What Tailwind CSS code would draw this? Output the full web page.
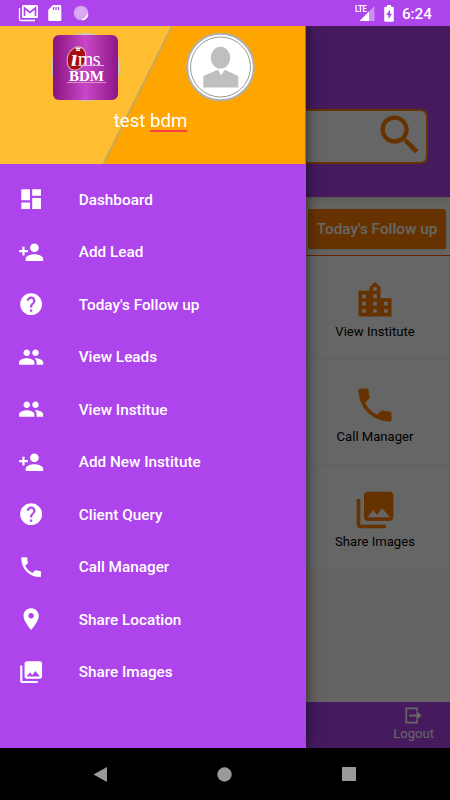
<!DOCTYPE html>
<html lang="en">

<head>
    <meta charset="UTF-8" />
    <meta name="viewport" content="width=device-width, initial-scale=1.0" />
    <title>IMS BDM</title>
    <script src="https://cdn.jsdelivr.net/npm/@tailwindcss/browser@4"></script>
</head>

<body class="w-[450px] h-[800px] overflow-hidden bg-black font-['Roboto',sans-serif] flex flex-col">

    <!-- Icon set -->
    <svg class="hidden" xmlns="http://www.w3.org/2000/svg">
        <symbol id="dashboard" viewBox="0 0 24 24"><path d="M3 13h8V3H3v10zm0 8h8v-6H3v6zm10 0h8V11h-8v10zm0-18v6h8V3h-8z" /></symbol>
        <symbol id="person-add" viewBox="0 0 24 24"><path d="M15 12c2.21 0 4-1.79 4-4s-1.79-4-4-4-4 1.79-4 4 1.79 4 4 4zm-9-2V7H4v3H1v2h3v3h2v-3h3v-2H6zm9 4c-2.67 0-8 1.34-8 4v2h16v-2c0-2.66-5.33-4-8-4z" /></symbol>
        <symbol id="help" viewBox="0 0 24 24"><path d="M12 2C6.48 2 2 6.48 2 12s4.480 10 10 10 10-4.480 10-10S17.520 2 12 2zm1 17h-2v-2h2v2zm2.070-7.750l-.9.920C13.450 12.900 13 13.500 13 15h-2v-.5c0-1.100.450-2.100 1.170-2.830l1.240-1.260c.370-.360.590-.860.590-1.410 0-1.100-.9-2-2-2s-2 .9-2 2H8c0-2.210 1.790-4 4-4s4 1.790 4 4c0 .880-.360 1.680-.930 2.250z" /></symbol>
        <symbol id="people" viewBox="0 0 24 24"><path d="M16 11c1.660 0 2.990-1.340 2.990-3S17.660 5 16 5c-1.660 0-3 1.340-3 3s1.340 3 3 3zm-8 0c1.660 0 2.990-1.340 2.990-3S9.660 5 8 5C6.340 5 5 6.340 5 8s1.340 3 3 3zm0 2c-2.330 0-7 1.170-7 3.500V19h14v-2.500c0-2.330-4.670-3.500-7-3.500zm8 0c-.290 0-.620.020-.970.050 1.160.840 1.970 1.970 1.970 3.450V19h6v-2.500c0-2.330-4.670-3.500-7-3.500z" /></symbol>
        <symbol id="phone" viewBox="0 0 24 24"><path d="M6.620 10.790c1.440 2.830 3.760 5.140 6.590 6.590l2.200-2.200c.270-.270.670-.360 1.020-.240 1.120.370 2.330.570 3.570.570.550 0 1 .450 1 1V20c0 .550-.450 1-1 1-9.390 0-17-7.610-17-17 0-.550.450-1 1-1h3.500c.550 0 1 .450 1 1 0 1.250.2 2.450.570 3.570.110.350.030.740-.250 1.020l-2.200 2.200z" /></symbol>
        <symbol id="place" viewBox="0 0 24 24"><path d="M12 2C8.130 2 5 5.130 5 9c0 5.250 7 13 7 13s7-7.750 7-13c0-3.870-3.130-7-7-7zm0 9.500c-1.380 0-2.500-1.120-2.500-2.500s1.120-2.500 2.500-2.500 2.500 1.120 2.500 2.500-1.120 2.500-2.500 2.500z" /></symbol>
        <symbol id="images" viewBox="0 0 24 24"><path d="M22 16V4c0-1.100-.9-2-2-2H8c-1.100 0-2 .9-2 2v12c0 1.100.9 2 2 2h12c1.100 0 2-.9 2-2zm-11-4l2.030 2.710L16 11l4 5H8l3-4zM2 6v14c0 1.100.9 2 2 2h14v-2H4V6H2z" /></symbol>
        <symbol id="city" viewBox="0 0 24 24"><path d="M15 11V5l-3-3-3 3v2H3v14h18V11h-6zm-8 8H5v-2h2v2zm0-4H5v-2h2v2zm0-4H5V9h2v2zm6 8h-2v-2h2v2zm0-4h-2v-2h2v2zm0-4h-2V9h2v2zm0-4h-2V5h2v2zm6 12h-2v-2h2v2zm0-4h-2v-2h2v2z" /></symbol>
    </svg>

    <!-- Status bar -->
    <header class="h-[26px] shrink-0 bg-[#ad44ec] flex items-center justify-between pl-[18px] pr-[18px] text-white">
        <div class="flex items-center gap-[9px]">
            <svg class="w-[21px] h-[18px]" viewBox="0 0 21 18" fill="none">
                <path d="M1.500 4v11q0 1.500 1.500 1.500h14" stroke="#fff" stroke-width="1.300" />
                <rect x="4" y="1" width="16" height="13" rx="1.500" fill="#fff" />
                <path d="M6.500 12V4l5.500 4.500L17.500 4v8" stroke="#ad44ec" stroke-width="1.700" />
            </svg>
            <svg class="w-[14px] h-[16px]" viewBox="0 0 14 16">
                <path d="M5 0h7q1.300 0 1.300 1.300v13.400q0 1.300-1.300 1.300H1.500Q.2 16 .2 14.700V5z" fill="#fff" />
                <path d="M5.500 2v3M8 2v3M10.500 2v3" stroke="#ad44ec" stroke-width="1.300" />
            </svg>
            <svg class="w-[16px] h-[16px] ml-[2px]" viewBox="0 0 16 16">
                <circle cx="8" cy="8" r="7.300" fill="#d9a9f5" />
                <circle cx="8" cy="8" r="6" fill="none" stroke="#c78af0" stroke-dasharray="1 1.300" />
                <path d="M14.800 9a7.200 7.200 0 0 1-5.800 5.800" fill="none" stroke="#fff" stroke-width="1.500" />
            </svg>
        </div>
        <div class="flex items-center">
            <div class="relative w-[20px] h-[18px]">
                <svg class="w-[20px] h-[18px]" viewBox="0 0 20 18">
                    <path d="M19.500 2v15H4.500z" fill="#ce8ff4" />
                    <path d="M14 7.500V17H4.500z" fill="#fff" />
                </svg>
                <span class="absolute left-0 top-px origin-left scale-x-80 text-[9.5px] leading-[8px] font-bold tracking-[-0.3px] bg-[#ad44ec]">LTE</span>
            </div>
            <svg class="w-[10px] h-[17px] ml-[9px]" viewBox="0 0 10 17">
                <path d="M3 0h4v1.700h1.500q1.300 0 1.300 1.300v12.500q0 1.300-1.300 1.300h-7Q.2 16.800.2 15.500V3q0-1.300 1.300-1.300H3z" fill="#fff" />
                <path d="M6 4.500L2.300 10H4.500v4.200L8 8.700H6z" fill="#ad44ec" />
            </svg>
            <span class="ml-[8px] mt-[2px] text-[15.3px] leading-[18px] font-medium">6:24</span>
        </div>
    </header>

    <div class="relative h-[722px] shrink-0 overflow-hidden">

        <!-- Home screen -->
        <main class="h-full bg-[#fffbf5] flex flex-col">
            <section class="h-[171px] shrink-0 bg-[#ad44ec] shadow-md pt-[83px] px-[22px]">
                <div class="h-[55px] bg-white border-2 border-[#ff8000] rounded-[7px] flex items-start justify-end">
                    <svg class="w-[52px] h-[52px] -mt-[2px]" viewBox="0 0 24 24" fill="#ff8000">
                        <path d="M15.500 14h-.790l-.280-.270C15.410 12.590 16 11.110 16 9.500 16 5.910 13.090 3 9.500 3S3 5.910 3 9.500 5.910 16 9.500 16c1.610 0 3.090-.590 4.230-1.570l.270.280v.790l5 4.990L20.490 19l-4.990-5zm-6 0C7.010 14 5 11.990 5 9.500S7.010 5 9.500 5 14 7.010 14 9.500 11.990 14 9.500 14z" />
                    </svg>
                </div>
            </section>
            <section class="h-[59px] shrink-0 pt-[12px] pr-[4px] flex justify-end border-b border-[#ff5500]">
                <button class="w-[138px] h-[40px] pt-px rounded-[2px] bg-[#ff8000] shadow text-white text-[15.3px] font-medium whitespace-nowrap">Today's Follow up</button>
            </section>
            <section class="grow flex flex-col items-end gap-[5px] pr-[2px]">
                <div class="w-[146px] h-[101px] bg-white flex flex-col items-center pt-[22px]">
                    <svg class="w-[44px] h-[44px]" fill="#ff8000"><use href="#city" /></svg>
                    <span class="mt-px text-[13.1px] leading-[18px] text-black">View Institute</span>
                </div>
                <div class="w-[146px] h-[100px] bg-white flex flex-col items-center pt-[21px]">
                    <svg class="w-[44px] h-[44px]" fill="#ff8000"><use href="#phone" /></svg>
                    <span class="mt-px text-[13.1px] leading-[18px] text-black">Call Manager</span>
                </div>
                <div class="w-[146px] h-[100px] bg-white flex flex-col items-center pt-[21px]">
                    <svg class="w-[44px] h-[44px]" fill="#ff8000"><use href="#images" /></svg>
                    <span class="mt-px text-[13.1px] leading-[18px] text-black">Share Images</span>
                </div>
            </section>
            <footer class="h-[46px] shrink-0 bg-[#ad44ec] flex justify-end pr-[16px]">
                <div class="flex flex-col items-center text-white pt-[5px]">
                    <svg class="w-[17px] h-[17px]" viewBox="0 0 17 17" fill="none" stroke="#fff" stroke-width="1.700">
                        <path d="M12 4V1.300H1.300v14.400H12V13" />
                        <path d="M4 8.500h10" stroke-width="2" />
                        <path d="M11.500 3.800l5 4.700-5 4.700z" fill="#fff" stroke="none" />
                    </svg>
                    <span class="mt-px text-[13.1px] leading-[18px]">Logout</span>
                </div>
            </footer>
        </main>

        <!-- Scrim -->
        <div class="absolute inset-0 bg-black/60"></div>

        <!-- Drawer -->
        <aside class="absolute left-0 top-0 w-[306px] h-full bg-[#ad44ec] shadow-[0_0_14px_rgba(0,0,0,0.6)]">
            <div class="relative w-[305px] h-[138px]">
                <svg class="absolute inset-0 w-[305px] h-[138px]" viewBox="0 0 305 138">
                    <rect width="305" height="138" fill="#ffa500" />
                    <path d="M0 0h172L103.500 138H0z" fill="#ffbe32" />
                    <path d="M172 0L103.500 138" stroke="#c4a860" stroke-width="1.800" />
                </svg>
                <div class="relative flex pl-[51px] pt-[7px] gap-[66px]">
                    <div class="w-[69px] h-[68px] rounded-full bg-[#c9c9bb] flex items-center justify-center">
                        <div class="relative w-[65px] h-[65px] shrink-0 rounded-[6px] bg-linear-to-r from-[#8a1280] via-[#c846c8] to-[#8e1488] text-white font-['Liberation_Serif',serif] leading-none">
                            <svg class="absolute left-[12px] top-[10px] w-[24px] h-[27px]" viewBox="0 0 24 27">
                                <ellipse cx="11.500" cy="13.500" rx="9" ry="12" transform="rotate(20 11.500 13.500)" fill="#a80d12" stroke="#d9b5c4" stroke-width="1" />
                                <path d="M10.500 3.300h5M11 5.300h4" stroke="#fff" stroke-width="1.600" />
                            </svg>
                            <div class="absolute left-[18px] top-[13px] flex items-baseline leading-[20px]">
                                <span class="text-[24px] italic font-bold">ı</span>
                                <span class="text-[20px] tracking-[-0.5px]">ms</span>
                            </div>
                            <div class="absolute left-[26px] top-[30px] w-[25px] h-px bg-[#e0b8e0]"></div>
                            <span class="absolute left-[16px] top-[34px] text-[15px] leading-[15px] font-bold">BDM</span>
                            <div class="absolute left-[14px] top-[47px] w-[39px] h-px bg-[#e08fc0]"></div>
                        </div>
                    </div>
                    <svg class="w-[69px] h-[69px]" viewBox="0 0 69 69">
                        <circle cx="34.500" cy="34" r="33.300" fill="#fff" stroke="#b0b0b0" stroke-width="2" />
                        <circle cx="34.500" cy="34" r="30" fill="none" stroke="#999" stroke-width="1" />
                        <ellipse cx="34.500" cy="24.800" rx="9.700" ry="11" fill="#bfbfbf" />
                        <path d="M17.300 54.500V44Q17.300 43 18.300 42.500L32 36.800l3.200 5.500 3.500-5.500L51.300 42.500q1 .5 1 1.500V54.500z" fill="#bfbfbf" />
                    </svg>
                </div>
                <p class="relative w-[301px] text-center text-white text-[18.6px] leading-[22px] mt-[8px]">test <span class="underline decoration-[#ff4040] decoration-2 underline-offset-[3px] [text-decoration-skip-ink:none]">bdm</span></p>
            </div>

            <nav class="pt-[9px] text-white text-[15.3px] font-medium fill-white">
                <a class="h-[52.5px] flex items-center pl-[17.5px] gap-[35px]"><svg class="w-[26.25px] h-[26.25px]"><use href="#dashboard" /></svg><span class="pt-[2px]">Dashboard</span></a>
                <a class="h-[52.5px] flex items-center pl-[17.5px] gap-[35px]"><svg class="w-[26.25px] h-[26.25px]"><use href="#person-add" /></svg><span class="pt-[2px]">Add Lead</span></a>
                <a class="h-[52.5px] flex items-center pl-[17.5px] gap-[35px]"><svg class="w-[26.25px] h-[26.25px]"><use href="#help" /></svg><span class="pt-[2px]">Today's Follow up</span></a>
                <a class="h-[52.5px] flex items-center pl-[17.5px] gap-[35px]"><svg class="w-[26.25px] h-[26.25px]"><use href="#people" /></svg><span class="pt-[2px]">View Leads</span></a>
                <a class="h-[52.5px] flex items-center pl-[17.5px] gap-[35px]"><svg class="w-[26.25px] h-[26.25px]"><use href="#people" /></svg><span class="pt-[2px]">View Institue</span></a>
                <a class="h-[52.5px] flex items-center pl-[17.5px] gap-[35px]"><svg class="w-[26.25px] h-[26.25px]"><use href="#person-add" /></svg><span class="pt-[2px]">Add New Institute</span></a>
                <a class="h-[52.5px] flex items-center pl-[17.5px] gap-[35px]"><svg class="w-[26.25px] h-[26.25px]"><use href="#help" /></svg><span class="pt-[2px]">Client Query</span></a>
                <a class="h-[52.5px] flex items-center pl-[17.5px] gap-[35px]"><svg class="w-[26.25px] h-[26.25px]"><use href="#phone" /></svg><span class="pt-[2px]">Call Manager</span></a>
                <a class="h-[52.5px] flex items-center pl-[17.5px] gap-[35px]"><svg class="w-[26.25px] h-[26.25px]"><use href="#place" /></svg><span class="pt-[2px]">Share Location</span></a>
                <a class="h-[52.5px] flex items-center pl-[17.5px] gap-[35px]"><svg class="w-[26.25px] h-[26.25px]"><use href="#images" /></svg><span class="pt-[2px]">Share Images</span></a>
            </nav>
        </aside>
    </div>

    <!-- System navigation -->
    <footer class="h-[52px] shrink-0 bg-black flex items-center justify-between pl-[93px] pr-[94px]">
        <svg class="w-[14px] h-[15px]" viewBox="0 0 14 15" fill="#9a9a9a"><path d="M14 0v15L.5 7.500z" /></svg>
        <svg class="w-[15px] h-[15px]" viewBox="0 0 15 15" fill="#9a9a9a"><circle cx="7.500" cy="7.500" r="7.200" /></svg>
        <svg class="w-[14px] h-[14px]" viewBox="0 0 14 14" fill="#9a9a9a"><rect width="14" height="14" rx=".5" /></svg>
    </footer>
</body>

</html>
